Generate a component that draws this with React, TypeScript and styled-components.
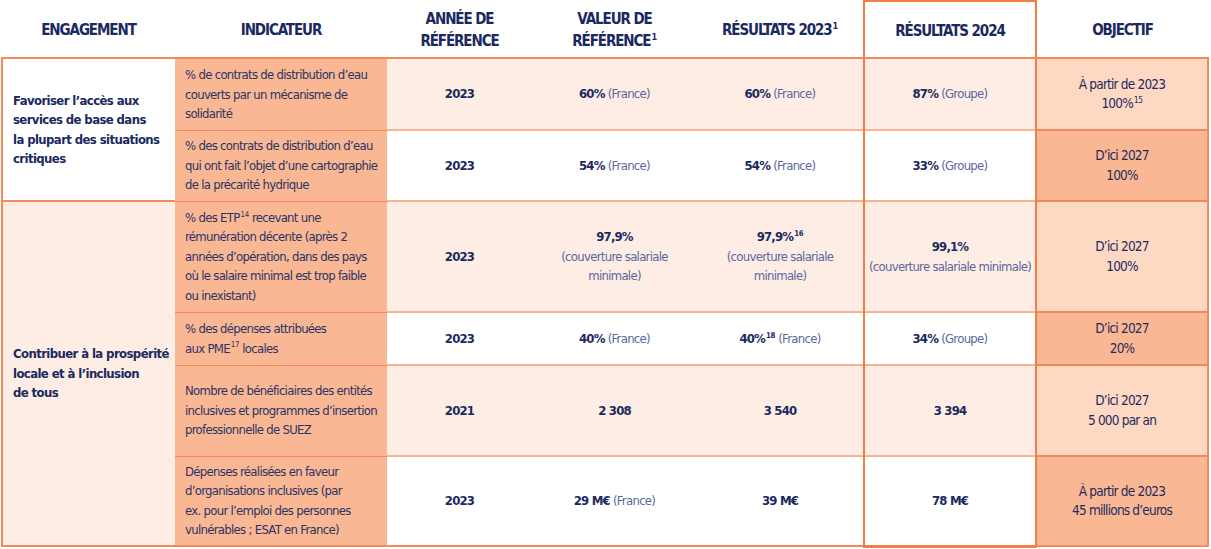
import React from "react";
import styled, { createGlobalStyle } from "styled-components";

const GlobalStyle = createGlobalStyle`
  html, body {
    margin: 0;
    padding: 0;
    background: #ffffff;
  }
  body {
    font-family: "DejaVu Sans Condensed", "DejaVu Sans", "Liberation Sans", sans-serif;
    font-stretch: condensed;
    color: #1d2a5c;
  }
`;

const Page = styled.div`
  padding-left: 1px;
`;

const Table = styled.table`
  border-collapse: collapse;
  table-layout: fixed;
  width: 1207px;
`;

const HeadRow = styled.tr`
  height: 57px;
`;

const HeadCell = styled.th<{ $hi?: boolean }>`
  padding: 2px 4px 0;
  text-align: center;
  vertical-align: middle;
  font-size: 15px;
  font-weight: 700;
  line-height: 22px;
  letter-spacing: -1.1px;
  color: #1a2960;
  border-bottom: 2px solid #f2885a;
  ${(p) =>
    p.$hi &&
    `
    border-top: 2px solid #f47c45;
    border-left: 2px solid #f47c45;
    border-right: 2px solid #f47c45;
  `}
`;

const Sup = styled.sup`
  font-size: 0.6em;
  line-height: 0;
  vertical-align: 0.65em;
  margin-left: 1px;
  letter-spacing: -0.3px;
`;

const BodyRow = styled.tr<{ $h: number }>`
  height: ${(p) => p.$h}px;
`;

const EngCell = styled.td<{ $pink?: boolean; $last?: boolean }>`
  padding: 0 4px 0 10px;
  vertical-align: middle;
  font-size: 13px;
  font-weight: 700;
  line-height: 19.5px;
  letter-spacing: -0.6px;
  color: #1a2960;
  background: ${(p) => (p.$pink ? "#fdede4" : "#ffffff")};
  border-left: 2px solid #f28a5c;
  border-top: 2px solid #f28a5c;
  ${(p) => p.$last && "border-bottom: 2px solid #f28a5c;"}
`;

const IndCell = styled.td<{ $last?: boolean }>`
  padding: 0 4px 0 10px;
  vertical-align: middle;
  font-size: 13px;
  line-height: 19.5px;
  letter-spacing: -0.7px;
  color: #2b3466;
  background: #f9b793;
  border-top: 1px solid #f2895a;
  ${(p) => p.$last && "border-bottom: 2px solid #f28a5c;"}
`;

const NumCell = styled.td<{ $pink?: boolean; $last?: boolean }>`
  padding: 0 6px;
  text-align: center;
  vertical-align: middle;
  font-size: 13px;
  line-height: 19.5px;
  letter-spacing: -0.7px;
  color: #1a2960;
  background: ${(p) => (p.$pink ? "#fdede4" : "#ffffff")};
  border-top: 2px solid #f8b393;
  ${(p) => p.$last && "border-bottom: 2px solid #f28a5c;"}
`;

const HiCell = styled(NumCell)`
  padding: 0;
  white-space: nowrap;
  border-left: 2px solid #f47c45;
  border-right: 2px solid #f47c45;
  ${(p) => p.$last && "border-bottom: 3px solid #f47c45;"}
`;

const ObjCell = styled.td<{ $dark?: boolean; $last?: boolean }>`
  padding: 0 6px;
  text-align: center;
  vertical-align: middle;
  font-size: 13.5px;
  line-height: 19.5px;
  letter-spacing: -0.8px;
  color: #1f2b5e;
  background: ${(p) => (p.$dark ? "#f9b893" : "#fdd8c2")};
  border-top: 2px solid #f2895a;
  border-right: 2px solid #f28a5c;
  ${(p) => p.$last && "border-bottom: 2px solid #f28a5c;"}
`;

const Strong = styled.b`
  font-weight: 700;
  letter-spacing: -0.8px;
  color: #1a2960;
`;

const Scope = styled.span`
  color: #5a67a0;
  font-weight: 400;
`;

type Row = {
  h: number;
  pink: boolean;
  ind: React.ReactNode;
  year: string;
  ref: React.ReactNode;
  r23: React.ReactNode;
  r24: React.ReactNode;
  obj: React.ReactNode;
  objDark: boolean;
};

const rows: Row[] = [
  {
    h: 72,
    pink: true,
    ind: <>% de contrats de distribution d’eau couverts par un mécanisme de solidarité</>,
    year: "2023",
    ref: <><Strong>60%</Strong> <Scope>(France)</Scope></>,
    r23: <><Strong>60%</Strong> <Scope>(France)</Scope></>,
    r24: <><Strong>87%</Strong> <Scope>(Groupe)</Scope></>,
    obj: <>À partir de 2023<br />100%<Sup>15</Sup></>,
    objDark: false,
  },
  {
    h: 71,
    pink: false,
    ind: <>% des contrats de distribution d’eau qui ont fait l’objet d’une cartographie de la précarité hydrique</>,
    year: "2023",
    ref: <><Strong>54%</Strong> <Scope>(France)</Scope></>,
    r23: <><Strong>54%</Strong> <Scope>(France)</Scope></>,
    r24: <><Strong>33%</Strong> <Scope>(Groupe)</Scope></>,
    obj: <>D’ici 2027<br />100%</>,
    objDark: true,
  },
  {
    h: 111,
    pink: true,
    ind: <>% des ETP<Sup>14</Sup> recevant une<br />rémunération décente (après 2<br />années d’opération, dans des pays<br />où le salaire minimal est trop faible<br />ou inexistant)</>,
    year: "2023",
    ref: <><Strong>97,9%</Strong><br /><Scope>(couverture salariale<br />minimale)</Scope></>,
    r23: <><Strong>97,9%<Sup>16</Sup></Strong><br /><Scope>(couverture salariale<br />minimale)</Scope></>,
    r24: <><Strong>99,1%</Strong><br /><Scope>(couverture salariale minimale)</Scope></>,
    obj: <>D’ici 2027<br />100%</>,
    objDark: false,
  },
  {
    h: 53,
    pink: false,
    ind: <>% des dépenses attribuées<br />aux PME<Sup>17</Sup> locales</>,
    year: "2023",
    ref: <><Strong>40%</Strong> <Scope>(France)</Scope></>,
    r23: <><Strong>40%<Sup>18</Sup></Strong> <Scope>(France)</Scope></>,
    r24: <><Strong>34%</Strong> <Scope>(Groupe)</Scope></>,
    obj: <>D’ici 2027<br />20%</>,
    objDark: true,
  },
  {
    h: 91,
    pink: true,
    ind: <>Nombre de bénéficiaires des entités inclusives et programmes d’insertion professionnelle de SUEZ</>,
    year: "2021",
    ref: <Strong>2 308</Strong>,
    r23: <Strong>3 540</Strong>,
    r24: <Strong>3 394</Strong>,
    obj: <>D’ici 2027<br />5 000 par an</>,
    objDark: false,
  },
  {
    h: 90,
    pink: false,
    ind: <>Dépenses réalisées en faveur<br />d’organisations inclusives (par<br />ex. pour l’emploi des personnes vulnérables ; ESAT en France)</>,
    year: "2023",
    ref: <><Strong>29 M€</Strong> <Scope>(France)</Scope></>,
    r23: <Strong>39 M€</Strong>,
    r24: <Strong>78 M€</Strong>,
    obj: <>À partir de 2023<br />45 millions d’euros</>,
    objDark: true,
  },
];

const engagements: { [i: number]: { span: number; text: React.ReactNode; pink: boolean } } = {
  0: {
    span: 2,
    pink: false,
    text: <>Favoriser l’accès aux<br />services de base dans<br />la plupart des situations<br />critiques</>,
  },
  2: {
    span: 4,
    pink: true,
    text: <>Contribuer à la prospérité<br />locale et à l’inclusion<br />de tous</>,
  },
};

export default function App() {
  return (
    <Page>
      <GlobalStyle />
      <Table>
        <colgroup>
          <col style={{ width: 173 }} />
          <col style={{ width: 212 }} />
          <col style={{ width: 145 }} />
          <col style={{ width: 165 }} />
          <col style={{ width: 167 }} />
          <col style={{ width: 172 }} />
          <col style={{ width: 172 }} />
        </colgroup>
        <thead>
          <HeadRow>
            <HeadCell>ENGAGEMENT</HeadCell>
            <HeadCell>INDICATEUR</HeadCell>
            <HeadCell>ANNÉE DE<br />RÉFÉRENCE</HeadCell>
            <HeadCell>VALEUR DE<br />RÉFÉRENCE<Sup>1</Sup></HeadCell>
            <HeadCell>RÉSULTATS 2023<Sup>1</Sup></HeadCell>
            <HeadCell $hi>RÉSULTATS 2024</HeadCell>
            <HeadCell>OBJECTIF</HeadCell>
          </HeadRow>
        </thead>
        <tbody>
          {rows.map((r, i) => {
            const last = i === rows.length - 1;
            const eng = engagements[i];
            return (
              <BodyRow key={i} $h={r.h}>
                {eng && (
                  <EngCell rowSpan={eng.span} $pink={eng.pink} $last={i + eng.span === rows.length}>
                    {eng.text}
                  </EngCell>
                )}
                <IndCell $last={last}>{r.ind}</IndCell>
                <NumCell $pink={r.pink} $last={last}><Strong>{r.year}</Strong></NumCell>
                <NumCell $pink={r.pink} $last={last}>{r.ref}</NumCell>
                <NumCell $pink={r.pink} $last={last}>{r.r23}</NumCell>
                <HiCell $pink={r.pink} $last={last}>{r.r24}</HiCell>
                <ObjCell $dark={r.objDark} $last={last}>{r.obj}</ObjCell>
              </BodyRow>
            );
          })}
        </tbody>
      </Table>
    </Page>
  );
}
